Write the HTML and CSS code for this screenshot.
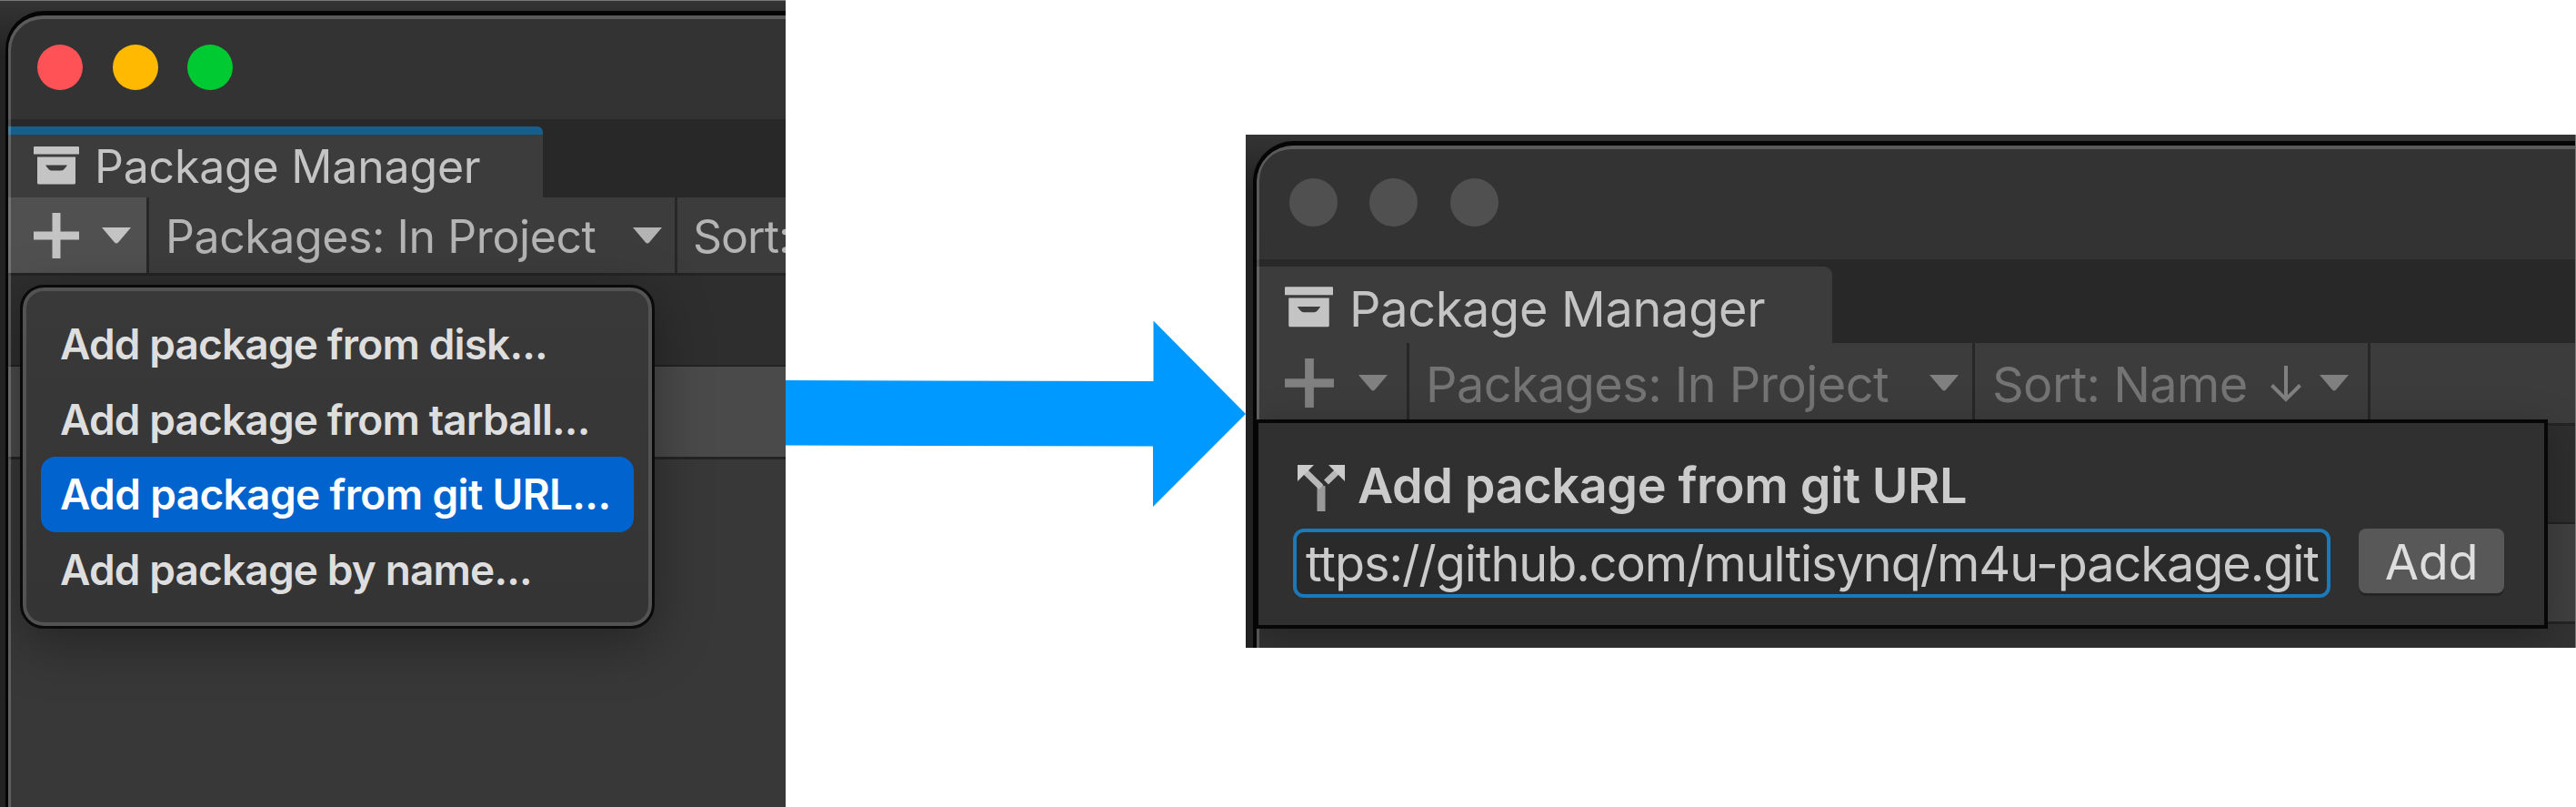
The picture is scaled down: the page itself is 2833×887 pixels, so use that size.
FILE: index.html
```html
<!DOCTYPE html>
<html lang="en">
<head>
<meta charset="utf-8">
<title>Package Manager</title>
<link rel="stylesheet" href="styles.css">
</head>
<body>
<svg class="defs" width="0" height="0" aria-hidden="true">
  <symbol id="package" viewBox="0 0 50 42">
    <path d="M1 0h48q1 0 1 1v7.500H0V1q0-1 1-1zM4 11.500h42V40q0 1.500-1.500 1.500h-39Q4 41.500 4 40zM13 20.500q2 3 4 5 1.200 1 3 1h10q1.800 0 3-1 2-2 4-5z" fill-rule="evenodd"/>
  </symbol>
  <symbol id="plus" viewBox="0 0 50 50"><path d="M20.500 0h9v20.500H50v9H29.500V50h-9V29.500H0v-9h20.500z"/></symbol>
  <symbol id="caret" viewBox="0 0 32 18"><path d="M0 0h32L18 16.500q-2 2-4 0z"/></symbol>
</svg>
<main class="canvas">
  <section class="pane pane-menu">
    <div class="window">
      <div class="titlebar"><i class="dot red"></i><i class="dot yellow"></i><i class="dot green"></i></div>
      <div class="tabs">
        <div class="tab"><svg class="pkg"><use href="#package"/></svg><span>Package Manager</span></div>
      </div>
      <div class="toolbar">
        <div class="tool add"><svg class="plus"><use href="#plus"/></svg><svg class="caret"><use href="#caret"/></svg></div>
        <div class="tool filter"><span>Packages: In Project</span><svg class="caret"><use href="#caret"/></svg></div>
        <div class="tool sort"><span>Sort:</span></div>
      </div>
      <div class="details"></div>
      <div class="band"></div>
      <div class="body"></div>
      <ul class="menu">
        <li>Add package from disk...</li>
        <li>Add package from tarball...</li>
        <li class="selected">Add package from git URL...</li>
        <li>Add package by name...</li>
      </ul>
    </div>
  </section>

  <svg class="arrow" viewBox="864 0 506 887"><path d="M864 418L1268.500 419V352.500L1370 455 1268 557V490.500L864 489.500z"/></svg>

  <section class="pane pane-url">
    <div class="window">
      <div class="titlebar"><i class="dot"></i><i class="dot"></i><i class="dot"></i></div>
      <div class="tabs">
        <div class="tab"><svg class="pkg"><use href="#package"/></svg><span>Package Manager</span></div>
      </div>
      <div class="toolbar">
        <div class="tool add"><svg class="plus"><use href="#plus"/></svg><svg class="caret"><use href="#caret"/></svg></div>
        <div class="tool filter"><span>Packages: In Project</span><svg class="caret"><use href="#caret"/></svg></div>
        <div class="tool sort"><span>Sort: Name</span><svg class="down" viewBox="0 0 34 40"><path d="M17 0V37M1.500 21.500L17 37 32.500 21.500"/></svg><svg class="caret"><use href="#caret"/></svg></div>
      </div>
      <div class="details"></div>
      <div class="band"></div>
      <div class="body"></div>
      <div class="popup">
        <div class="heading">
          <svg class="git" viewBox="0 0 52 52"><path class="stem" d="M26 24V52"/><path class="arm" d="M8 8L26 25.500M44 8L31.500 20"/><path d="M0 1H18L0 19zM52 1H34L52 19z"/></svg>
          <h1>Add package from git URL</h1>
        </div>
        <div class="form">
          <div class="field"><span>ttps://github.com/multisynq/m4u-package.git</span></div>
          <div class="button"><span>Add</span></div>
        </div>
      </div>
    </div>
  </section>
</main>
</body>
</html>
```
FILE: styles.css
```css
* { box-sizing: border-box; }
body { margin: 0; background: #fff; font-family: Inter, "Liberation Sans", sans-serif; font-optical-sizing: none; }
svg { display: block; flex: none; fill: currentColor; }
.defs { position: absolute; }
.canvas { display: flex; width: 2833px; height: 887px; overflow: hidden; align-items: flex-start; }

.pane { flex: none; overflow: hidden; display: flex; background: linear-gradient(#343434, #222 60px); }
.pane-menu { width: 864px; height: 887px; border-top: 1px solid #777; padding: 11px 0 0 6px; }
.pane-url { width: 1463px; height: 564px; margin-top: 148px; padding: 7px 0 0 8px; border-right: 1px solid #777; }

.window { position: relative; flex: 1; min-width: 0; display: flex; flex-direction: column; overflow: hidden; background: #383838; border: solid #050505; border-width: 5px 0 0 3px; border-top-left-radius: 42px; }
.window::after { content: ""; position: absolute; inset: 0; border: solid rgba(255, 255, 255, .2); border-width: 4px 0 0 3px; border-top-left-radius: 38px; pointer-events: none; }
.pane-url .window { border-left-width: 4px; border-top-left-radius: 45px; }

.titlebar { flex: none; display: flex; align-items: center; height: 114px; padding-left: 32px; gap: 32.5px; background: #333; }
.dot { width: 50px; height: 50px; border-radius: 50%; background: #505050; }
.red { background: #ff5257; }
.yellow { background: #ffb900; }
.green { background: #00ca31; }

.tabs { flex: none; height: 86px; padding-top: 8px; background: #282828; }
.tab { display: flex; width: 588px; height: 78px; padding: 13px 0 0 28px; background: #3c3c3c; border-top: 9px solid #165f8c; border-top-right-radius: 6px; color: #c4c4c4; }
.tab span { padding-top: 1px; margin-left: 17px; font-size: 50px; line-height: 42px; letter-spacing: -.2px; white-space: nowrap; }
.pkg { width: 50px; height: 42px; }

.toolbar { flex: none; display: flex; height: 86px; background: #3c3c3c; border-bottom: 3px solid #242424; color: #b4b4b4; }
.tool { display: flex; flex: none; align-items: center; border-right: 3px solid #272727; }
.tool span { padding-top: 3px; font-size: 50px; line-height: 80px; letter-spacing: -.42px; white-space: nowrap; }
.plus { width: 50px; height: 50px; }
.caret { width: 32px; height: 18px; }
.add { width: 155px; padding-left: 28px; gap: 25px; }
.pane-menu .add { background: #505050; color: #c4c4c4; }
.filter { width: 581px; padding: 0 14px 0 18px; justify-content: space-between; }
.sort { padding-left: 17px; }
.pane-menu .sort { border-right: 0; width: 119px; }
.pane-menu .sort span { letter-spacing: -1px; }

.details { flex: none; height: 100px; background: #2e2e2e; border-bottom: 2px solid #222; }
.band { flex: none; height: 102px; background: #4a4a4a; border-bottom: 3px solid #242424; }
.body { flex: 1; background: #383838; }

.menu { position: absolute; left: 13px; top: 296px; width: 698px; height: 378px; margin: 0; padding: 21px 20px; list-style: none; border: 3px solid #0a0a0a; border-radius: 26px; background: linear-gradient(#393939, #343434); box-shadow: inset 0 0 0 4px #535353, 0 16px 60px rgba(0, 0, 0, .35); color: #dedede; }
.menu li { height: 82.5px; padding-left: 21px; border-radius: 16px; font-size: 46px; font-weight: 600; line-height: 83px; letter-spacing: -.87px; white-space: nowrap; }
.menu .selected { background: #0063ce; color: #fff; letter-spacing: -.65px; }

.arrow { width: 506px; height: 887px; color: #09f; }

.pane-url .titlebar { height: 125px; padding-left: 35.500px; gap: 35.500px; }
.pane-url .dot { width: 53px; height: 53px; }
.pane-url .tabs { height: 92px; }
.pane-url .tab { width: 633px; height: 84px; padding: 22px 0 0 31px; border-top: 0; border-top-right-radius: 9px; }
.pane-url .tab span { padding-top: 2px; margin-left: 18px; font-size: 54px; line-height: 46px; letter-spacing: -.3px; }
.pane-url .pkg { width: 53px; height: 45px; }
.pane-url .toolbar { height: 91px; padding-bottom: 1px; color: #808080; }
.pane-url .tool span { padding-top: 5px; font-size: 54px; line-height: 82px; letter-spacing: -.57px; color: #747474; }
.pane-url .plus { width: 54px; height: 54px; }
.pane-url .add { width: 168px; padding-left: 31px; gap: 27px; }
.pane-url .filter { width: 622px; padding: 0 15px 0 18px; }
.pane-url .sort { width: 435px; padding: 0 21px 0 19px; justify-content: flex-start; }
.down { width: 34px; height: 40px; margin: 2px 20px 0 auto; fill: none; stroke: currentColor; stroke-width: 4; }
.pane-url .details { height: 108px; }
.pane-url .band { height: 110px; background: #404040; }
.pane-url .body { background: #323232; }

.popup { position: absolute; z-index: 1; left: 0; top: 301px; width: 1420px; height: 230px; padding: 41px 44px 0 38px; border: 4px solid #070707; border-left-width: 2px; background: #303030; box-shadow: 0 10px 40px rgba(0, 0, 0, .25); }
.heading { display: flex; height: 75px; padding: 4px 0 0 5px; color: #cbcbcb; }
.git { width: 52px; height: 52px; margin-right: 14px; }
.git .stem { stroke: #999; stroke-width: 9; }
.git .arm { stroke: #b8b8b8; stroke-width: 7; }
h1 { margin: 0; padding-top: 1px; font-size: 54px; font-weight: 600; line-height: 46px; letter-spacing: -.4px; white-space: nowrap; }
.form { display: flex; justify-content: space-between; align-items: flex-start; }
.field { display: flex; width: 1141px; height: 76px; padding-left: 10px; border: 4px solid #1b78b9; border-radius: 12px; background: #2a2a2a; color: #cbcbcb; overflow: hidden; }
.field span { font-size: 54px; line-height: 69px; letter-spacing: -1.05px; white-space: nowrap; }
.button { width: 160px; height: 71px; border-radius: 8px; background: #585858; color: #dedede; text-align: center; box-shadow: 0 3px 0 #252525; }
.button span { font-size: 54px; line-height: 74px; letter-spacing: -.3px; }
```
